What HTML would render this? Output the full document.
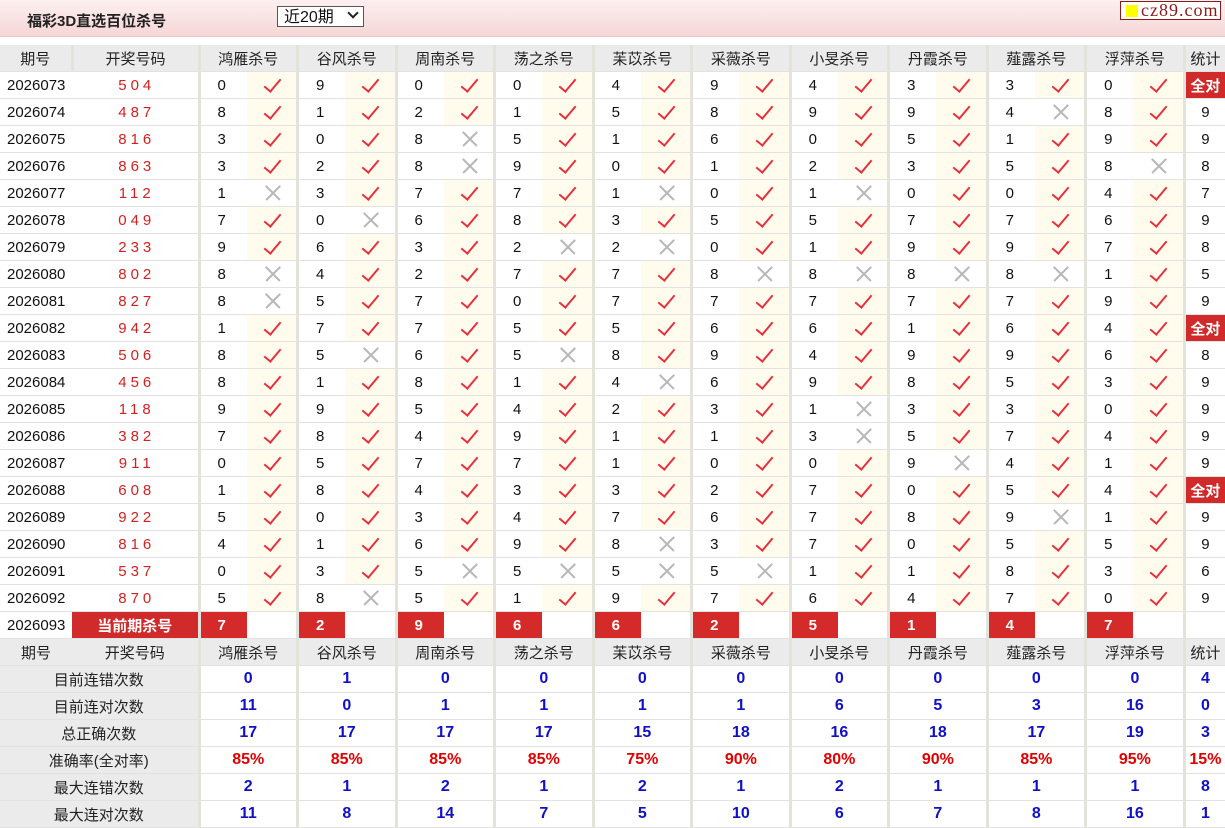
<!DOCTYPE html>
<html><head><meta charset="utf-8"><style>
body{margin:0;width:1225px;height:827px;overflow:hidden;background:#fff;font-family:"Liberation Sans","Noto Sans CJK SC",sans-serif;}
.top{position:absolute;left:0;top:0;width:1225px;height:36px;background:linear-gradient(#fdf0f0,#f6d6d6);border-bottom:1px solid #e8c8c8;}
.title{position:absolute;left:27px;top:10px;font-size:15px;font-weight:bold;color:#222;}
.sel{position:absolute;left:277px;top:6px;width:87px;height:21px;border:1px solid #555;background:#fff;font-size:16px;line-height:21px;box-sizing:border-box;padding-left:6px;color:#111;}
.sel b{position:absolute;right:6px;top:6px;width:6px;height:6px;border-right:2px solid #222;border-bottom:2px solid #222;transform:rotate(45deg);top:2px}
.logo{position:absolute;left:1120px;top:1px;width:101px;height:19px;border:1px solid #8b1a1a;background:#fff;box-sizing:border-box;font-family:"Liberation Serif",serif;font-size:18px;line-height:17px;color:#8b1a1a;padding-left:20px;letter-spacing:1px}
.logo:before{content:"";position:absolute;left:5px;top:3px;width:12px;height:12px;background:#ffff00}
table{position:absolute;left:0;top:45px;border-collapse:collapse;table-layout:fixed;width:1225px;}
td{height:26px;border-bottom:1px solid #e2e2e2;padding:0;text-align:center;font-size:15px;color:#111;white-space:nowrap;overflow:hidden;}
tr.h td{background:#ebebeb;color:#222;}
td.n{border-left:3px solid #e3e3dc;text-align:left;padding-left:17px;}
tr.h td.n,tr.s td.n{text-align:center;padding-left:0}
td.d{text-align:left;padding-left:7px;}
td.r{color:#d42020;letter-spacing:4px;padding-left:4px}
td.v{background:#fffcee;position:relative}
td.v:after{content:"";position:absolute;left:21px;top:3px;width:7px;height:15px;border-right:2px solid #e8303c;border-bottom:2px solid #e8303c;transform:rotate(40deg);}
td.x{position:relative}
td.x:before,td.x:after{content:"";position:absolute;left:16px;top:12px;width:20px;height:1.5px;background:#b8b8b8;transform:rotate(45deg)}
td.x:after{transform:rotate(-45deg)}
td.q{background:#d02a2a;color:#fff;font-weight:bold;}
td.k{background:#d42a2a;color:#fff;font-weight:bold;text-align:left;padding-left:17px;}
td.t{border-left:3px solid #e3e3dc;}
tr.s td{font-weight:bold;color:#1010c8;font-size:16px}
tr.s td.l{background:#ebebeb;color:#222;font-weight:normal;font-size:15px}
tr.p td{color:#e00000}
tr.p td.l{color:#222}
</style></head><body>
<div class="top"><div class="title">福彩3D直选百位杀号</div><div class="sel">近20期<b></b></div><div class="logo">cz89.com</div></div>
<table>
<colgroup><col style="width:72px"><col style="width:127px">
<col style="width:47.5px"><col style="width:51px"><col style="width:47.5px"><col style="width:51px"><col style="width:47.5px"><col style="width:51px"><col style="width:47.5px"><col style="width:51px"><col style="width:47.5px"><col style="width:51px"><col style="width:47.5px"><col style="width:51px"><col style="width:47.5px"><col style="width:51px"><col style="width:47.5px"><col style="width:51px"><col style="width:47.5px"><col style="width:51px"><col style="width:47.5px"><col style="width:51px"><col style="width:41px"></colgroup>
<tr class="h"><td>期号</td><td class="n">开奖号码</td><td class="n" colspan="2">鸿雁杀号</td><td class="n" colspan="2">谷风杀号</td><td class="n" colspan="2">周南杀号</td><td class="n" colspan="2">荡之杀号</td><td class="n" colspan="2">苿苡杀号</td><td class="n" colspan="2">采薇杀号</td><td class="n" colspan="2">小旻杀号</td><td class="n" colspan="2">丹霞杀号</td><td class="n" colspan="2">薤露杀号</td><td class="n" colspan="2">浮萍杀号</td><td class="t">统计</td></tr>
<tr><td class="d">2026073</td><td class="r">504</td><td class="n">0</td><td class="v"></td><td class="n">9</td><td class="v"></td><td class="n">0</td><td class="v"></td><td class="n">0</td><td class="v"></td><td class="n">4</td><td class="v"></td><td class="n">9</td><td class="v"></td><td class="n">4</td><td class="v"></td><td class="n">3</td><td class="v"></td><td class="n">3</td><td class="v"></td><td class="n">0</td><td class="v"></td><td class="t q">全对</td></tr>
<tr><td class="d">2026074</td><td class="r">487</td><td class="n">8</td><td class="v"></td><td class="n">1</td><td class="v"></td><td class="n">2</td><td class="v"></td><td class="n">1</td><td class="v"></td><td class="n">5</td><td class="v"></td><td class="n">8</td><td class="v"></td><td class="n">9</td><td class="v"></td><td class="n">9</td><td class="v"></td><td class="n">4</td><td class="x"></td><td class="n">8</td><td class="v"></td><td class="t">9</td></tr>
<tr><td class="d">2026075</td><td class="r">816</td><td class="n">3</td><td class="v"></td><td class="n">0</td><td class="v"></td><td class="n">8</td><td class="x"></td><td class="n">5</td><td class="v"></td><td class="n">1</td><td class="v"></td><td class="n">6</td><td class="v"></td><td class="n">0</td><td class="v"></td><td class="n">5</td><td class="v"></td><td class="n">1</td><td class="v"></td><td class="n">9</td><td class="v"></td><td class="t">9</td></tr>
<tr><td class="d">2026076</td><td class="r">863</td><td class="n">3</td><td class="v"></td><td class="n">2</td><td class="v"></td><td class="n">8</td><td class="x"></td><td class="n">9</td><td class="v"></td><td class="n">0</td><td class="v"></td><td class="n">1</td><td class="v"></td><td class="n">2</td><td class="v"></td><td class="n">3</td><td class="v"></td><td class="n">5</td><td class="v"></td><td class="n">8</td><td class="x"></td><td class="t">8</td></tr>
<tr><td class="d">2026077</td><td class="r">112</td><td class="n">1</td><td class="x"></td><td class="n">3</td><td class="v"></td><td class="n">7</td><td class="v"></td><td class="n">7</td><td class="v"></td><td class="n">1</td><td class="x"></td><td class="n">0</td><td class="v"></td><td class="n">1</td><td class="x"></td><td class="n">0</td><td class="v"></td><td class="n">0</td><td class="v"></td><td class="n">4</td><td class="v"></td><td class="t">7</td></tr>
<tr><td class="d">2026078</td><td class="r">049</td><td class="n">7</td><td class="v"></td><td class="n">0</td><td class="x"></td><td class="n">6</td><td class="v"></td><td class="n">8</td><td class="v"></td><td class="n">3</td><td class="v"></td><td class="n">5</td><td class="v"></td><td class="n">5</td><td class="v"></td><td class="n">7</td><td class="v"></td><td class="n">7</td><td class="v"></td><td class="n">6</td><td class="v"></td><td class="t">9</td></tr>
<tr><td class="d">2026079</td><td class="r">233</td><td class="n">9</td><td class="v"></td><td class="n">6</td><td class="v"></td><td class="n">3</td><td class="v"></td><td class="n">2</td><td class="x"></td><td class="n">2</td><td class="x"></td><td class="n">0</td><td class="v"></td><td class="n">1</td><td class="v"></td><td class="n">9</td><td class="v"></td><td class="n">9</td><td class="v"></td><td class="n">7</td><td class="v"></td><td class="t">8</td></tr>
<tr><td class="d">2026080</td><td class="r">802</td><td class="n">8</td><td class="x"></td><td class="n">4</td><td class="v"></td><td class="n">2</td><td class="v"></td><td class="n">7</td><td class="v"></td><td class="n">7</td><td class="v"></td><td class="n">8</td><td class="x"></td><td class="n">8</td><td class="x"></td><td class="n">8</td><td class="x"></td><td class="n">8</td><td class="x"></td><td class="n">1</td><td class="v"></td><td class="t">5</td></tr>
<tr><td class="d">2026081</td><td class="r">827</td><td class="n">8</td><td class="x"></td><td class="n">5</td><td class="v"></td><td class="n">7</td><td class="v"></td><td class="n">0</td><td class="v"></td><td class="n">7</td><td class="v"></td><td class="n">7</td><td class="v"></td><td class="n">7</td><td class="v"></td><td class="n">7</td><td class="v"></td><td class="n">7</td><td class="v"></td><td class="n">9</td><td class="v"></td><td class="t">9</td></tr>
<tr><td class="d">2026082</td><td class="r">942</td><td class="n">1</td><td class="v"></td><td class="n">7</td><td class="v"></td><td class="n">7</td><td class="v"></td><td class="n">5</td><td class="v"></td><td class="n">5</td><td class="v"></td><td class="n">6</td><td class="v"></td><td class="n">6</td><td class="v"></td><td class="n">1</td><td class="v"></td><td class="n">6</td><td class="v"></td><td class="n">4</td><td class="v"></td><td class="t q">全对</td></tr>
<tr><td class="d">2026083</td><td class="r">506</td><td class="n">8</td><td class="v"></td><td class="n">5</td><td class="x"></td><td class="n">6</td><td class="v"></td><td class="n">5</td><td class="x"></td><td class="n">8</td><td class="v"></td><td class="n">9</td><td class="v"></td><td class="n">4</td><td class="v"></td><td class="n">9</td><td class="v"></td><td class="n">9</td><td class="v"></td><td class="n">6</td><td class="v"></td><td class="t">8</td></tr>
<tr><td class="d">2026084</td><td class="r">456</td><td class="n">8</td><td class="v"></td><td class="n">1</td><td class="v"></td><td class="n">8</td><td class="v"></td><td class="n">1</td><td class="v"></td><td class="n">4</td><td class="x"></td><td class="n">6</td><td class="v"></td><td class="n">9</td><td class="v"></td><td class="n">8</td><td class="v"></td><td class="n">5</td><td class="v"></td><td class="n">3</td><td class="v"></td><td class="t">9</td></tr>
<tr><td class="d">2026085</td><td class="r">118</td><td class="n">9</td><td class="v"></td><td class="n">9</td><td class="v"></td><td class="n">5</td><td class="v"></td><td class="n">4</td><td class="v"></td><td class="n">2</td><td class="v"></td><td class="n">3</td><td class="v"></td><td class="n">1</td><td class="x"></td><td class="n">3</td><td class="v"></td><td class="n">3</td><td class="v"></td><td class="n">0</td><td class="v"></td><td class="t">9</td></tr>
<tr><td class="d">2026086</td><td class="r">382</td><td class="n">7</td><td class="v"></td><td class="n">8</td><td class="v"></td><td class="n">4</td><td class="v"></td><td class="n">9</td><td class="v"></td><td class="n">1</td><td class="v"></td><td class="n">1</td><td class="v"></td><td class="n">3</td><td class="x"></td><td class="n">5</td><td class="v"></td><td class="n">7</td><td class="v"></td><td class="n">4</td><td class="v"></td><td class="t">9</td></tr>
<tr><td class="d">2026087</td><td class="r">911</td><td class="n">0</td><td class="v"></td><td class="n">5</td><td class="v"></td><td class="n">7</td><td class="v"></td><td class="n">7</td><td class="v"></td><td class="n">1</td><td class="v"></td><td class="n">0</td><td class="v"></td><td class="n">0</td><td class="v"></td><td class="n">9</td><td class="x"></td><td class="n">4</td><td class="v"></td><td class="n">1</td><td class="v"></td><td class="t">9</td></tr>
<tr><td class="d">2026088</td><td class="r">608</td><td class="n">1</td><td class="v"></td><td class="n">8</td><td class="v"></td><td class="n">4</td><td class="v"></td><td class="n">3</td><td class="v"></td><td class="n">3</td><td class="v"></td><td class="n">2</td><td class="v"></td><td class="n">7</td><td class="v"></td><td class="n">0</td><td class="v"></td><td class="n">5</td><td class="v"></td><td class="n">4</td><td class="v"></td><td class="t q">全对</td></tr>
<tr><td class="d">2026089</td><td class="r">922</td><td class="n">5</td><td class="v"></td><td class="n">0</td><td class="v"></td><td class="n">3</td><td class="v"></td><td class="n">4</td><td class="v"></td><td class="n">7</td><td class="v"></td><td class="n">6</td><td class="v"></td><td class="n">7</td><td class="v"></td><td class="n">8</td><td class="v"></td><td class="n">9</td><td class="x"></td><td class="n">1</td><td class="v"></td><td class="t">9</td></tr>
<tr><td class="d">2026090</td><td class="r">816</td><td class="n">4</td><td class="v"></td><td class="n">1</td><td class="v"></td><td class="n">6</td><td class="v"></td><td class="n">9</td><td class="v"></td><td class="n">8</td><td class="x"></td><td class="n">3</td><td class="v"></td><td class="n">7</td><td class="v"></td><td class="n">0</td><td class="v"></td><td class="n">5</td><td class="v"></td><td class="n">5</td><td class="v"></td><td class="t">9</td></tr>
<tr><td class="d">2026091</td><td class="r">537</td><td class="n">0</td><td class="v"></td><td class="n">3</td><td class="v"></td><td class="n">5</td><td class="x"></td><td class="n">5</td><td class="x"></td><td class="n">5</td><td class="x"></td><td class="n">5</td><td class="x"></td><td class="n">1</td><td class="v"></td><td class="n">1</td><td class="v"></td><td class="n">8</td><td class="v"></td><td class="n">3</td><td class="v"></td><td class="t">6</td></tr>
<tr><td class="d">2026092</td><td class="r">870</td><td class="n">5</td><td class="v"></td><td class="n">8</td><td class="x"></td><td class="n">5</td><td class="v"></td><td class="n">1</td><td class="v"></td><td class="n">9</td><td class="v"></td><td class="n">7</td><td class="v"></td><td class="n">6</td><td class="v"></td><td class="n">4</td><td class="v"></td><td class="n">7</td><td class="v"></td><td class="n">0</td><td class="v"></td><td class="t">9</td></tr>
<tr><td class="d">2026093</td><td class="q">当前期杀号</td><td class="n k">7</td><td></td><td class="n k">2</td><td></td><td class="n k">9</td><td></td><td class="n k">6</td><td></td><td class="n k">6</td><td></td><td class="n k">2</td><td></td><td class="n k">5</td><td></td><td class="n k">1</td><td></td><td class="n k">4</td><td></td><td class="n k">7</td><td></td><td class="t"></td></tr>
<tr class="h"><td>期号</td><td>开奖号码</td><td class="n" colspan="2">鸿雁杀号</td><td class="n" colspan="2">谷风杀号</td><td class="n" colspan="2">周南杀号</td><td class="n" colspan="2">荡之杀号</td><td class="n" colspan="2">苿苡杀号</td><td class="n" colspan="2">采薇杀号</td><td class="n" colspan="2">小旻杀号</td><td class="n" colspan="2">丹霞杀号</td><td class="n" colspan="2">薤露杀号</td><td class="n" colspan="2">浮萍杀号</td><td class="t">统计</td></tr>
<tr class="s"><td class="l" colspan="2">目前连错次数</td><td class="n" colspan="2">0</td><td class="n" colspan="2">1</td><td class="n" colspan="2">0</td><td class="n" colspan="2">0</td><td class="n" colspan="2">0</td><td class="n" colspan="2">0</td><td class="n" colspan="2">0</td><td class="n" colspan="2">0</td><td class="n" colspan="2">0</td><td class="n" colspan="2">0</td><td class="t">4</td></tr>
<tr class="s"><td class="l" colspan="2">目前连对次数</td><td class="n" colspan="2">11</td><td class="n" colspan="2">0</td><td class="n" colspan="2">1</td><td class="n" colspan="2">1</td><td class="n" colspan="2">1</td><td class="n" colspan="2">1</td><td class="n" colspan="2">6</td><td class="n" colspan="2">5</td><td class="n" colspan="2">3</td><td class="n" colspan="2">16</td><td class="t">0</td></tr>
<tr class="s"><td class="l" colspan="2">总正确次数</td><td class="n" colspan="2">17</td><td class="n" colspan="2">17</td><td class="n" colspan="2">17</td><td class="n" colspan="2">17</td><td class="n" colspan="2">15</td><td class="n" colspan="2">18</td><td class="n" colspan="2">16</td><td class="n" colspan="2">18</td><td class="n" colspan="2">17</td><td class="n" colspan="2">19</td><td class="t">3</td></tr>
<tr class="s p"><td class="l" colspan="2">准确率(全对率)</td><td class="n" colspan="2">85%</td><td class="n" colspan="2">85%</td><td class="n" colspan="2">85%</td><td class="n" colspan="2">85%</td><td class="n" colspan="2">75%</td><td class="n" colspan="2">90%</td><td class="n" colspan="2">80%</td><td class="n" colspan="2">90%</td><td class="n" colspan="2">85%</td><td class="n" colspan="2">95%</td><td class="t">15%</td></tr>
<tr class="s"><td class="l" colspan="2">最大连错次数</td><td class="n" colspan="2">2</td><td class="n" colspan="2">1</td><td class="n" colspan="2">2</td><td class="n" colspan="2">1</td><td class="n" colspan="2">2</td><td class="n" colspan="2">1</td><td class="n" colspan="2">2</td><td class="n" colspan="2">1</td><td class="n" colspan="2">1</td><td class="n" colspan="2">1</td><td class="t">8</td></tr>
<tr class="s"><td class="l" colspan="2">最大连对次数</td><td class="n" colspan="2">11</td><td class="n" colspan="2">8</td><td class="n" colspan="2">14</td><td class="n" colspan="2">7</td><td class="n" colspan="2">5</td><td class="n" colspan="2">10</td><td class="n" colspan="2">6</td><td class="n" colspan="2">7</td><td class="n" colspan="2">8</td><td class="n" colspan="2">16</td><td class="t">1</td></tr>
</table>
</body></html>
